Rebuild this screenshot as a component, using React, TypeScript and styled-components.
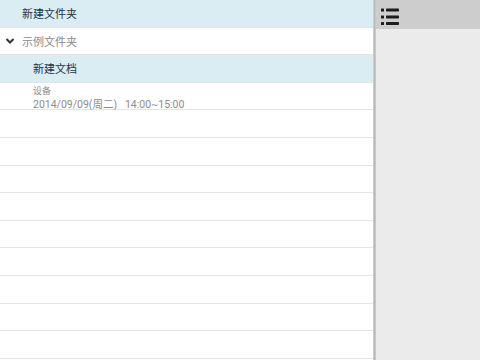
import React from 'react';
import styled, { createGlobalStyle } from 'styled-components';

const GlobalStyle = createGlobalStyle`
  html, body {
    margin: 0;
    padding: 0;
    width: 480px;
    height: 360px;
    overflow: hidden;
    background: #ebebeb;
  }
  * {
    box-sizing: border-box;
  }
`

const Page = styled.div`
  display: flex;
  flex-flow: row nowrap;
  width: 480px;
  height: 360px;
  font-family: Roboto, "Noto Sans CJK SC", sans-serif;
`

const ListPanel = styled.div`
  display: flex;
  flex-flow: column nowrap;
  width: 373px;
  height: 100%;
  background: #fff;
`

const Divider = styled.div`
  width: 3px;
  height: 100%;
  background: linear-gradient(to right, #d6d6d6, #b9b9b9 50%, #cfcfcf);
`

const SidePanel = styled.div`
  display: flex;
  flex-flow: column nowrap;
  flex-grow: 1;
  background: #ebebeb;
`

const SideBar = styled.div`
  display: flex;
  align-items: center;
  height: 29px;
  padding-left: 4px;
  background: #cdcdcd;
`

const Row = styled.div<{ $active?: boolean; $indent?: number }>`
  display: flex;
  flex-flow: row nowrap;
  align-items: center;
  height: 27.6px;
  flex-shrink: 0;
  padding-left: ${p => p.$indent ?? 22}px;
  background: ${p => (p.$active ? '#daedf3' : '#fff')};
  border-bottom: 1px solid #e4e4e4;
`

const Title = styled.span<{ $muted?: boolean }>`
  font-size: 11px;
  color: ${p => (p.$muted ? '#8a8a8a' : '#26324a')};
`

const Chevron = styled.span`
  display: flex;
  width: 16px;
  margin-left: -17px;
  margin-right: 1px;
`

const Detail = styled.div`
  display: flex;
  flex-flow: column nowrap;
  justify-content: center;
  padding-top: 4px;
  line-height: 13px;
  color: #8c8c8c;
`

const Place = styled.span`
  font-size: 9px;
`

const When = styled.span`
  font-size: 10.5px;
  white-space: pre;
`

const ListIcon = () => (
  <svg width="20" height="20" viewBox="0 0 20 20">
    <rect x="1" y="3.5" width="3" height="3" rx="0.6" fill="#1d1d1d" />
    <rect x="1" y="10.5" width="3" height="3" rx="0.6" fill="#1d1d1d" />
    <rect x="1" y="17" width="3" height="3" rx="0.6" fill="#1d1d1d" />
    <rect x="6" y="3.5" width="13" height="3" rx="0.8" fill="#1d1d1d" />
    <rect x="6" y="10.5" width="13" height="3" rx="0.8" fill="#1d1d1d" />
    <rect x="6" y="17" width="13" height="3" rx="0.8" fill="#1d1d1d" />
  </svg>
)

const ChevronDown = () => (
  <svg width="10" height="8" viewBox="0 0 10 8">
    <path d="M1.5 2 L5 5.5 L8.5 2" stroke="#333" strokeWidth="2" fill="none" />
  </svg>
)

const blankRows = Array.from({ length: 9 })

function App() {
  return (
    <Page>
      <GlobalStyle />
      <ListPanel>
        <Row $active>
          <Title>新建文件夹</Title>
        </Row>
        <Row>
          <Chevron>
            <ChevronDown />
          </Chevron>
          <Title $muted>示例文件夹</Title>
        </Row>
        <Row $active $indent={33}>
          <Title>新建文档</Title>
        </Row>
        <Row $indent={33}>
          <Detail>
            <Place>设备</Place>
            <When>2014/09/09(周二)   14:00~15:00</When>
          </Detail>
        </Row>
        {blankRows.map((_, i) => (
          <Row key={i} />
        ))}
      </ListPanel>
      <Divider />
      <SidePanel>
        <SideBar>
          <ListIcon />
        </SideBar>
      </SidePanel>
    </Page>
  )
}

export default App;
